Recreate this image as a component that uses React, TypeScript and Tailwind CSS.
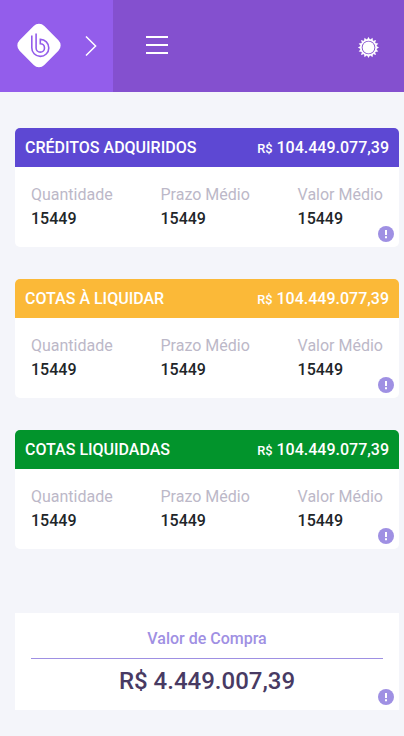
import React from "react";

function InfoBadge() {
  return (
    <svg className="absolute right-[5px] bottom-[5px] h-4 w-4" viewBox="0 0 16 16" aria-hidden="true">
      <circle cx="8" cy="8" r="8" fill="#9f90e3" />
      <path d="M7 4h2v5H7zM7 10.3h2v1.9H7z" fill="#fff" />
    </svg>
  );
}

function Logo() {
  return (
    <svg className="h-[46px] w-[46px]" viewBox="0 0 46 46" aria-label="Logo">
      <rect x="5.5" y="5" width="35" height="35" rx="7.5" fill="#fff" transform="rotate(45 23 22.5)" />
      <path
        d="M15.8 12.5V24.7A8.5 8.5 0 1 0 24.3 16.4V20.7A4.2 4.2 0 1 1 20.1 24.9V10.5"
        fill="none"
        stroke="#935deb"
        strokeWidth="1.6"
      />
    </svg>
  );
}

const RAYS = Array.from({ length: 16 }, (_, i) => i * 22.5);

function SunIcon() {
  return (
    <svg className="h-[22px] w-[22px]" viewBox="0 0 22 22" aria-hidden="true">
      {RAYS.map((angle) => (
        <path key={angle} d="M9.3 3.5L11 .4L12.7 3.5z" fill="#fff" transform={`translate(.5 -.5) rotate(${angle} 11 11)`} />
      ))}
      <circle cx="11.5" cy="10.5" r="7.5" fill="none" stroke="#fff" strokeWidth="1.3" />
      <circle cx="11.5" cy="10.5" r="5.9" fill="#fff" />
    </svg>
  );
}

function Header() {
  return (
    <header className="flex h-[92px] bg-[#8450cf]">
      <div className="flex w-[113px] items-center bg-[#935deb] pl-4">
        <Logo />
        <svg className="ml-[23px] h-5 w-3" viewBox="0 0 12 20" fill="none" stroke="#fff" strokeWidth="1.5">
          <path d="M1 .5L10.6 10L1 19.5" />
        </svg>
      </div>
      <div className="flex flex-1 items-center justify-between pr-[25px] pl-[33px]">
        <div className="-mt-0.5 flex w-[22px] flex-col gap-1.5">
          <span className="h-0.5 bg-white" />
          <span className="h-0.5 bg-white" />
          <span className="h-0.5 bg-white" />
        </div>
        <div className="mt-1">
          <SunIcon />
        </div>
      </div>
    </header>
  );
}

function SummaryCard({ title, color }: { title: string; color: string }) {
  return (
    <section className="relative h-[119px] overflow-hidden rounded-[5px] bg-white">
      <div className={`flex h-[39px] items-center justify-between px-2.5 font-medium text-white ${color}`}>
        <h2>{title}</h2>
        <p>
          <span className="text-[12.8px]">R$</span> 104.449.077,39
        </p>
      </div>
      <dl className="flex justify-between px-4 pt-4 leading-6">
        {["Quantidade", "Prazo Médio", "Valor Médio"].map((label) => (
          <div key={label}>
            <dt className="text-[#bcb8c8]">{label}</dt>
            <dd className="font-medium text-[#212529]">15449</dd>
          </div>
        ))}
      </dl>
      <InfoBadge />
    </section>
  );
}

export default function App() {
  return (
    <div className="h-[736px] overflow-hidden bg-[#f4f5fa] font-[Roboto,sans-serif] text-base">
      <Header />
      <main className="flex flex-col gap-8 pt-9 pr-[5px] pl-[15px]">
        <SummaryCard title="CRÉDITOS ADQUIRIDOS" color="bg-[#5d48d3]" />
        <SummaryCard title="COTAS À LIQUIDAR" color="bg-[#fbb938]" />
        <SummaryCard title="COTAS LIQUIDADAS" color="bg-[#02942c]" />
        <section className="relative mt-8 h-[97px] bg-white px-4 pt-3.5 text-center">
          <h2 className="h-8 border-b border-[#9f90e3] leading-6 font-medium text-[#9f90e3]">Valor de Compra</h2>
          <p className="pt-1 text-2xl leading-9 font-medium text-[#483a63]">R$ 4.449.007,39</p>
          <InfoBadge />
        </section>
      </main>
    </div>
  );
}
